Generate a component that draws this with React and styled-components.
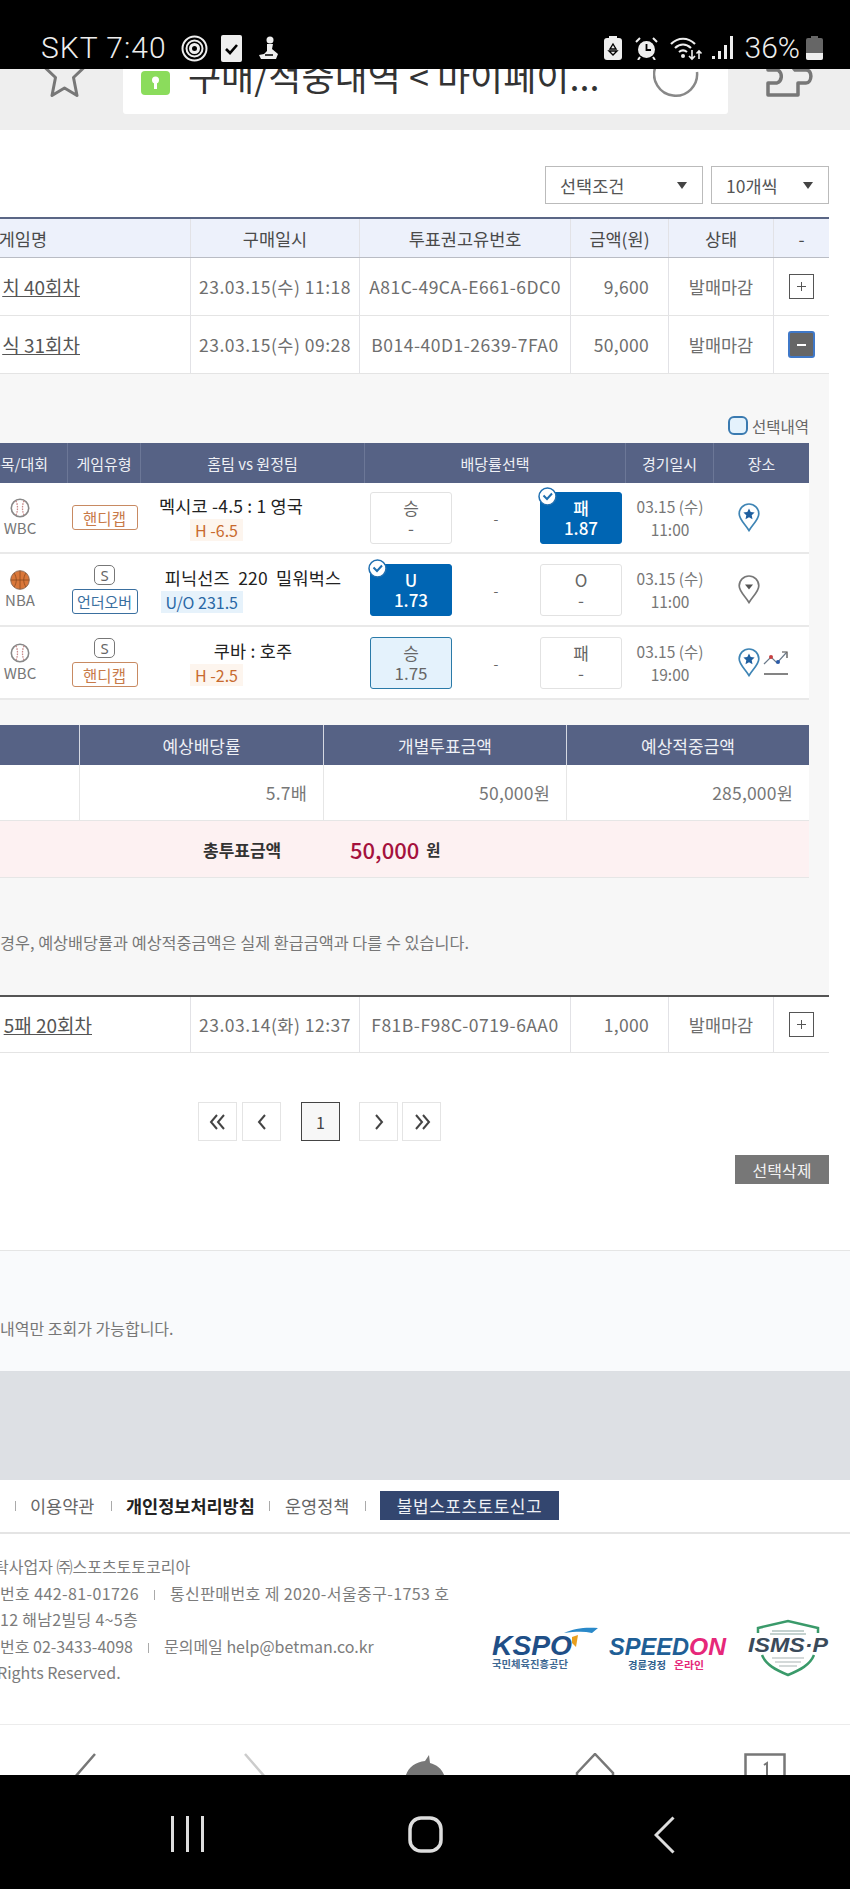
import React from "react";
import styled, { createGlobalStyle } from "styled-components";

const Global = createGlobalStyle`
  html, body { margin: 0; padding: 0; background: #fff; }
  body { font-family: "Noto Sans CJK KR", "Noto Sans", sans-serif; color: #666; }
  * { box-sizing: border-box; }
`;

const Screen = styled.div`
  width: 850px; height: 1889px; overflow: hidden;
  display: flex; flex-direction: column; background: #fff;
`;

/* status bar */
const StatusBar = styled.div`
  height: 69px; flex: none; background: #000; color: #eee;
  display: flex; align-items: flex-start; justify-content: space-between;
  padding: 33px 27px 0 41px;
`;
const StatusGroup = styled.div`display: flex; align-items: center; height: 30px;`;
const StatusText = styled.span`
  font-family: Roboto, sans-serif; font-size: 30px; line-height: 30px; white-space: pre;
  margin-right: ${p => p.$mr || 0}px; font-weight: 300; letter-spacing: ${p => p.$sp || 0}px;
`;
const StatusIcon = styled.svg`display: block; flex: none; margin-right: ${p => p.$mr || 0}px;`;

/* browser bar */
const BrowserBar = styled.div`
  height: 61px; flex: none; background: #eee; overflow: hidden; position: relative;
  display: flex; align-items: flex-start; padding-left: 44px;
`;
const BarIcon = styled.svg`
  display: block; flex: none; position: relative; z-index: 1;
  margin-top: ${p => p.$mt}px; margin-left: ${p => p.$ml || 0}px;
`;
const UrlBox = styled.div`
  width: 605px; height: 61px; margin-top: -16px; margin-left: 38px; background: #fff; border-radius: 3px;
  display: flex; align-items: center; padding: 0 18px 18px; gap: 18px; flex: none;
`;
const LockIcon = styled.svg`flex: none; margin-top: 16px;`;
const UrlTitle = styled.span`font-size: 36px; line-height: 44px; color: #333; white-space: nowrap;`;

/* content */
const Content = styled.div`flex: 1; min-height: 0; overflow: hidden; display: flex; flex-direction: column;`;
const Filters = styled.div`width: 829px; display: flex; justify-content: flex-end; gap: 8px; padding-top: 36px; margin-bottom: 13px;`;
const Select = styled.div`
  width: ${p => p.$w}px; height: 38px; border: 1px solid #bbb; background: #fff;
  display: flex; align-items: center; justify-content: space-between; padding: 0 15px 0 14px;
  font-size: 17.5px; color: #555;
  &::after { content: ""; border: 5px solid transparent; border-top: 7px solid #444; border-bottom: 0; }
`;

const MainGrid = styled.div`
  width: 829px; display: grid; grid-template-columns: 191px 169px 211px 98px 105px 55px;
  height: ${p => p.$h}px; background: ${p => p.$head ? "#edf1fb" : "#fff"};
  border-top: ${p => p.$head ? "2px solid #5a6685" : p.$strong ? "2px solid #555" : "0"};
  border-bottom: 1px solid ${p => p.$head ? "#b9bcc4" : "#e4e4e4"};
`;
const MainCell = styled.div`
  display: flex; align-items: center; justify-content: ${p => p.$right ? "flex-end" : "center"}; white-space: nowrap;
  font-size: 17.5px; letter-spacing: ${p => p.$sp || 0}px; color: ${p => p.$head ? "#4a4a4a" : "#6e6e6e"};
  border-right: 1px solid #e2e2e6; padding: 0 ${p => p.$pr || 0}px 0 0;
  &:last-child { border-right: 0; }
`;
const GameLink = styled.a`color: #555; text-decoration: underline; font-size: 19px;`;
const Toggle = styled.div`
  width: ${p => p.$open ? 27 : 25}px; height: ${p => p.$open ? 27 : 25}px;
  border: ${p => p.$open ? "2px solid #3f78c8" : "1.5px solid #555"}; border-radius: ${p => p.$open ? 3 : 0}px;
  background: ${p => p.$open ? "#666" : "#fff"}; position: relative;
  &::before { content: ""; position: absolute; left: 50%; top: 50%; width: 9px; height: ${p => p.$open ? 2 : 1}px; margin: -1px 0 0 -4.5px;
    background: ${p => p.$open ? "#fff" : "#555"}; }
  ${p => !p.$open && `&::after { content: ""; position: absolute; left: 50%; top: 50%; width: 1px; height: 9px; margin: -5px 0 0 -.5px; background: #555; }`}
`;

/* expanded panel */
const Panel = styled.div`width: 829px; height: 621px; background: #f7f7f7; padding-right: 20px; display: flex; flex-direction: column;`;
const Legend = styled.div`display: flex; justify-content: flex-end; align-items: center; gap: 4px; margin-top: 42px; height: 19px; margin-bottom: 8px; font-size: 15.5px; color: #666;`;
const LegendBox = styled.span`width: 20px; height: 19px; border: 2px solid #3a7ab0; background: #e4f2fc; border-radius: 6px;`;
const OddsHead = styled.div`
  display: grid; grid-template-columns: 68px 73px 224px 261px 88px 95px; height: 40px; background: #566285;
`;
const HeadCell = styled.div`
  display: flex; align-items: center; justify-content: ${p => p.$end ? "flex-end" : "center"}; white-space: nowrap;
  color: #eef0f5; font-size: 15px; border-right: 1px solid #6c7797; padding-right: ${p => p.$pr || 0}px;
  &:last-child { border-right: 0; }
`;
const OddsRow = styled.div`
  display: grid; grid-template-columns: 68px 73px 224px 261px 88px 95px; height: ${p => p.$h}px;
  background: #fff; border-bottom: 2px solid #e9e9e9; align-items: center;
`;
const SportCell = styled.div`width: 40px; display: flex; flex-direction: column; align-items: center; font-size: 15px; line-height: 20px; color: #777;`;
const TypeCell = styled.div`display: flex; flex-direction: column; align-items: center; gap: 4px;`;
const SBadge = styled.span`
  width: 21px; height: 20px; border: 1.5px solid #777; border-radius: 5px; color: #666;
  display: flex; align-items: center; justify-content: center; font-size: 15px; font-family: "Noto Sans", sans-serif;
`;
const TypeBadge = styled.span`
  width: 66px; height: 25px; border: 1.5px solid ${p => p.$blue ? "#3a6f9f" : "#c88a62"}; border-radius: 3px;
  color: ${p => p.$blue ? "#3a6f9f" : "#c87a48"}; font-size: ${p => p.$blue ? 15 : 15.5}px; background: #fff;
  display: flex; align-items: center; justify-content: center; white-space: nowrap;
`;
const TeamCell = styled.div`display: flex; flex-direction: column; gap: 2px;`;
const Teams = styled.div`
  font-size: 17.5px; letter-spacing: .2px; line-height: 22px; color: #222; white-space: pre; font-weight: 400;
  ${p => p.$left ? "margin-left: 18px;" : "text-align: center;"}
`;
const TagRow = styled.div`margin-left: 18px; width: 84px; display: flex; justify-content: flex-end; white-space: nowrap;`;
const Tag = styled.span`
  height: 22px; padding: 0 5px; line-height: 22px; font-size: 16px; white-space: nowrap; flex: none;
  background: ${p => p.$blue ? "#e6f2fb" : "#fdf5ee"}; color: ${p => p.$blue ? "#2a68a5" : "#c86a2e"};
`;
const OddsCell = styled.div`display: flex; align-items: center; justify-content: space-between; padding: 0 4px 0 5px; font-size: 14px; color: #666;`;
const OddsBtn = styled.div`
  width: ${p => p.$w}px; height: 52px; border-radius: 3px; position: relative;
  display: flex; flex-direction: column; align-items: center; justify-content: center;
  font-size: 17px; line-height: 20px;
  background: ${p => p.$state === "on" ? "#0065b3" : p.$state === "pick" ? "#e4f2fc" : "#fff"};
  color: ${p => p.$state === "on" ? "#fff" : "#666"};
  font-weight: ${p => p.$state === "on" ? 500 : 400};
  border: ${p => p.$state === "on" ? "1px solid #0065b3" : p.$state === "pick" ? "1.5px solid #2a7aa8" : "1.5px solid #e2e2e2"};
`;
const Check = styled.svg`position: absolute; left: -3px; top: -6px;`;
const DateCell = styled.div`text-align: center; font-size: 15.5px; line-height: 23px; color: #777;`;
const VenueCell = styled.div`display: flex; align-items: center; padding-left: 24px; gap: 3px;`;

const SumHead = styled.div`display: grid; grid-template-columns: 80px 244px 243px 242px; height: 40px; margin-top: 25px; background: #566285;`;
const SumHeadCell = styled.div`
  display: flex; align-items: center; justify-content: center; color: #eef0f5; font-size: 17px;
  border-right: 1px solid #d5d8e2; &:last-child { border-right: 0; }
`;
const SumRow = styled.div`display: grid; grid-template-columns: 80px 244px 243px 242px; height: 56px; background: #fff; border-bottom: 1px solid #e6e6e6;`;
const SumCell = styled.div`
  display: flex; align-items: center; justify-content: flex-end; padding-right: 16px; color: #777; font-size: 17.5px; letter-spacing: .2px;
  border-right: 1px solid #e6e6e6; &:last-child { border-right: 0; }
`;
const TotalRow = styled.div`
  height: 57px; background: #fdf1f2; border-bottom: 1px solid #e6e6e6; display: flex; align-items: center; padding-left: 203px;
`;
const TotalLabel = styled.span`font-size: 17px; font-weight: 700; color: #333; margin-right: 67px; width: 80px; white-space: nowrap;`;
const TotalValue = styled.span`font-size: 22px; font-weight: 500; color: #a5123d; margin-right: 7px;`;
const TotalUnit = styled.span`font-size: 15.5px; font-weight: 700; color: #333;`;
const Note = styled.div`margin-top: 52px; font-size: 16.3px; line-height: 24px; color: #777; white-space: nowrap;`;

/* pagination */
const Pager = styled.div`display: flex; padding-left: 198px; margin-top: 49px; height: 39px; width: 829px;`;
const PageBtn = styled.div`
  width: 39px; height: 39px; border: 1.5px solid ${p => p.$cur ? "#444" : "#e4e4e4"};
  background: ${p => p.$cur ? "#f7f7f7" : "#fff"}; color: #444; font-size: 16px;
  display: flex; align-items: center; justify-content: center; margin-left: ${p => p.$ml || 0}px;
`;
const ActionRow = styled.div`width: 829px; display: flex; justify-content: flex-end; margin-top: 14px;`;
const DeleteBtn = styled.div`width: 94px; height: 29px; background: #777; color: #f2f2f2; font-size: 16px; display: flex; align-items: center; justify-content: center;`;

/* notice + gap */
const NoticeBand = styled.div`
  margin-top: 66px; height: 122px; background: #f9fafc; border-top: 1px solid #e5e5e5; border-bottom: 1px solid #dcdfe3;
  padding-top: 65px; font-size: 16px; line-height: 24px; color: #777; white-space: nowrap;
`;
const GrayBand = styled.div`height: 108px; background: #dde0e4; flex: none;`;

/* footer */
const FootNav = styled.div`height: 54px; flex: none; border-bottom: 2px solid #e4e4e4; display: flex; align-items: center; padding-bottom: 1px; font-size: 17.5px; color: #666; white-space: nowrap;`;
const Sep = styled.i`width: 1px; height: 10px; background: #aaa; flex: none; margin-left: ${p => p.$ml}px; margin-right: ${p => p.$mr}px;`;
const FootLink = styled.span`font-weight: ${p => p.$bold ? 700 : 400}; color: ${p => p.$bold ? "#222" : "#666"}; width: ${p => p.$w}px; flex: none;`;
const ReportBtn = styled.div`
  width: 179px; height: 29px; background: #33466f; color: #eef0f5; font-size: 17px; letter-spacing: .5px;
  display: flex; align-items: center; justify-content: center; flex: none;
`;
const FootBody = styled.div`height: 191px; flex: none; border-bottom: 1px solid #ececec; display: flex; justify-content: space-between; padding: 19px 21px 0 0;`;
const FootLines = styled.div`display: flex; flex-direction: column; font-size: 16px; line-height: 26.5px; color: #7c7c7c; white-space: nowrap;`;
const FootLine = styled.div`text-indent: ${p => p.$indent || 0}px; letter-spacing: ${p => p.$sp || 0}px;`;
const FootSep = styled.span`display: inline-block; width: 1px; height: 10px; background: #aaa; margin: 0 15px;`;
const Logos = styled.div`display: flex; align-items: flex-start; margin-top: 74px; flex: none;`;
const Logo = styled.svg`display: block; flex: none; margin-left: ${p => p.$ml || 0}px; margin-top: ${p => p.$mt || 0}px;`;

/* browser bottom nav */
const BottomNav = styled.div`height: 50px; flex: none; overflow: hidden; display: grid; grid-template-columns: repeat(5, 170px); padding-top: 28px; background: #fff;`;
const NavSlot = styled.div`display: flex; justify-content: center;`;
const SysNav = styled.div`height: 114px; flex: none; background: #000; display: flex; align-items: flex-start; padding: 41px 0 0 171px;`;
const SysIcon = styled.svg`display: block; flex: none; margin-right: ${p => p.$mr || 0}px;`;

/* icons */
const Ball = () => (
  <svg width="20" height="20" viewBox="0 0 20 20">
    <circle cx="10" cy="10" r="8.7" fill="#fff" stroke="#888" strokeWidth="1.6" />
    <path d="M6 2.8c2 4.400 2 10 0 14.400M14 2.800c-2 4.400-2 10 0 14.400" fill="none" stroke="#c98a8a" strokeWidth="1.3" strokeDasharray="1.600 1" />
  </svg>
);
const Basket = () => (
  <svg width="20" height="20" viewBox="0 0 20 20">
    <circle cx="10" cy="10" r="9.300" fill="#d9773a" stroke="#8d6a55" strokeWidth="1" />
    <path d="M1 10h18M10 1v18M4 3c3 4 3 10 0 14M16 3c-3 4-3 10 0 14" fill="none" stroke="#8c4a20" strokeWidth=".8" />
  </svg>
);
const Pin = ({ star, gray }) => (
  <svg width="22" height="29" viewBox="0 0 22 29">
    <path d="M11 27.500C7 21 1.200 16.500 1.200 10.800a9.800 9.800 0 0 1 19.600 0C20.800 16.500 15 21 11 27.500z" fill="#fff" stroke={gray ? "#777" : "#3f85b5"} strokeWidth="1.700" />
    {star
      ? <path d="M11 5.500l1.700 3.600 3.900.5-2.900 2.700.8 3.900-3.500-2-3.500 2 .8-3.900-2.900-2.700 3.900-.5z" fill="#1f5f9f" />
      : <path d="M7 9.500h8l-4 5z" fill="#555" />}
  </svg>
);
const ChartIcon = () => (
  <svg width="26" height="26" viewBox="0 0 26 26">
    <path d="M1 14l7-7 6 6 9-10" fill="none" stroke="#6a7a8a" strokeWidth="1.200" />
    <circle cx="8" cy="7" r="2" fill="#c84040" /><circle cx="15" cy="12" r="2" fill="#2a5aa8" />
    <path d="M19 2h5v6" fill="none" stroke="#444" strokeWidth="1.200" />
    <path d="M1 24h24" stroke="#666" strokeWidth="1.600" />
  </svg>
);
const CheckMark = () => (
  <Check width="19" height="19" viewBox="0 0 19 19">
    <circle cx="9.500" cy="9.500" r="8.500" fill="#fff" stroke="#1f6fb0" strokeWidth="1.500" />
    <path d="M5.500 8.500l3.500 3.500 5-5.500" fill="none" stroke="#1f6fb0" strokeWidth="2" />
  </Check>
);
const TypeCol = ({ s, blue, label }) => (
  <TypeCell>
    {s && <SBadge>S</SBadge>}
    <TypeBadge $blue={blue}>{label}</TypeBadge>
  </TypeCell>
);

const mainRows = [
  { name: "치 40회차", pr: 110, date: "23.03.15(수) 11:18", code: "A81C-49CA-E661-6DC0", amt: "9,600" },
  { name: "식 31회차", pr: 110, date: "23.03.15(수) 09:28", code: "B014-40D1-2639-7FA0", amt: "50,000", open: true },
  { name: "5패 20회차", pr: 98, date: "23.03.14(화) 12:37", code: "F81B-F98C-0719-6AA0", amt: "1,000", strong: true },
];

const MainRow = ({ r }) => (
  <MainGrid $h={58} $strong={r.strong}>
    <MainCell $right $pr={r.pr}><GameLink>{r.name}</GameLink></MainCell>
    <MainCell $sp={.5}>{r.date}</MainCell>
    <MainCell $sp={.5}>{r.code}</MainCell>
    <MainCell $right $pr={19} $sp={.3}>{r.amt}</MainCell>
    <MainCell>발매마감</MainCell>
    <MainCell><Toggle $open={r.open} /></MainCell>
  </MainGrid>
);

export default function App() {
  return (
    <Screen>
      <Global />
      <StatusBar>
        <StatusGroup>
          <StatusText $mr={14} $sp={1}>SKT 7:40</StatusText>
          <StatusIcon $mr={13} width="27" height="27" viewBox="0 0 27 27">
            <g fill="none" stroke="#eee"><circle cx="13.500" cy="13.500" r="12" strokeWidth="2" /><circle cx="13.500" cy="13.500" r="8" strokeWidth="2" /><circle cx="13.500" cy="13.500" r="4" strokeWidth="3" /></g>
          </StatusIcon>
          <StatusIcon $mr={16} width="21" height="27" viewBox="0 0 21 27">
            <rect width="21" height="27" rx="2" fill="#eee" /><path d="M5 14l4 4 7-8" fill="none" stroke="#000" strokeWidth="2.600" />
          </StatusIcon>
          <StatusIcon width="22" height="25" viewBox="0 0 22 25">
            <circle cx="12" cy="4" r="3.500" fill="#eee" /><path d="M9 8h6l-1 5 6 5-2 5H3l-2-4 5-1 3-3z" fill="#eee" /><path d="M7 19h8" stroke="#000" strokeWidth="1.500" />
          </StatusIcon>
        </StatusGroup>
        <StatusGroup>
          <StatusIcon $mr={13} width="18" height="24" viewBox="0 0 18 24">
            <rect x="5" width="8" height="3" fill="#eee" /><rect y="2" width="18" height="22" rx="3" fill="#eee" />
            <path d="M9 8l3 5H6zM5 15h8l-4 4z" fill="none" stroke="#000" strokeWidth="1.400" />
          </StatusIcon>
          <StatusIcon $mr={12} width="23" height="23" viewBox="0 0 23 23">
            <circle cx="11.500" cy="12.500" r="8.500" fill="#eee" /><path d="M11.500 7v6h4.500" fill="none" stroke="#000" strokeWidth="1.800" />
            <path d="M1 5l4-4M22 5l-4-4M5 20l-2 3M18 20l2 3" stroke="#eee" strokeWidth="2" />
          </StatusIcon>
          <StatusIcon $mr={9} width="33" height="25" viewBox="0 0 33 25">
            <g fill="none" stroke="#eee" strokeWidth="2.200"><path d="M1 8c7-7 17-7 24 0" /><path d="M5 12c5-4.500 11-4.500 16 0" /><path d="M9 16c2.500-2 5.500-2 8 0" /></g>
            <circle cx="13" cy="20" r="2" fill="#eee" />
            <path d="M22 14v9m-3-3l3 3 3-3M29 23v-8m-2.500 2.500l2.500-2.500 2.500 2.500" fill="none" stroke="#eee" strokeWidth="1.600" />
          </StatusIcon>
          <StatusIcon $mr={12} width="21" height="24" viewBox="0 0 21 24">
            <g fill="#eee"><rect y="20" width="3" height="3" /><rect x="6" y="15" width="3" height="8" /><rect x="12" y="9" width="3" height="14" /><rect x="18" y="0" width="3" height="23" /></g>
          </StatusIcon>
          <StatusText $mr={6}>36%</StatusText>
          <StatusIcon width="17" height="24" viewBox="0 0 17 24">
            <rect x="5" width="7" height="3" fill="#666" /><rect y="2" width="17" height="22" rx="2" fill="#666" />
            <path d="M0 17h17v5a2 2 0 0 1-2 2H2a2 2 0 0 1-2-2z" fill="#eee" />
          </StatusIcon>
        </StatusGroup>
      </StatusBar>

      <BrowserBar>
        <BarIcon $mt={-20} width="41" height="48" viewBox="0 0 41 48">
          <path d="M20.500 3l6 14.500 13.500 1-10.500 10 3.500 18-12.500-7.500-12.500 7.500 3.500-18L1 18.500l13.500-1z" fill="none" stroke="#777" strokeWidth="3" strokeLinejoin="round" />
        </BarIcon>
        <UrlBox>
          <LockIcon width="29" height="24" viewBox="0 0 29 24">
            <rect width="29" height="24" rx="4" fill="#8bdc5c" /><circle cx="14.500" cy="9" r="3.500" fill="#fff" /><rect x="13" y="10" width="3" height="8" fill="#fff" />
          </LockIcon>
          <UrlTitle>구매/적중내역 &lt; 마이페이...</UrlTitle>
        </UrlBox>
        <BarIcon $mt={-17} $ml={-75} width="46" height="46" viewBox="0 0 46 46">
          <path d="M44 20A21.500 21.500 0 1 1 34 4" fill="none" stroke="#888" strokeWidth="2.500" />
        </BarIcon>
        <BarIcon $mt={-19} $ml={66} width="48" height="48" viewBox="0 0 48 48">
          <path d="M3 10V20H13C18 24 17 31 12 33H3V45H33V33H41C47 33 48 20 41 20H30C26 16 26 12 30 10" fill="none" stroke="#777" strokeWidth="3.500" strokeLinejoin="round" />
        </BarIcon>
      </BrowserBar>

      <Content>
        <Filters>
          <Select $w={158}>선택조건</Select>
          <Select $w={118}>10개씩</Select>
        </Filters>

        <MainGrid $head $h={41}>
          <MainCell $head $right $pr={143}>게임명</MainCell>
          <MainCell $head>구매일시</MainCell>
          <MainCell $head>투표권고유번호</MainCell>
          <MainCell $head>금액(원)</MainCell>
          <MainCell $head>상태</MainCell>
          <MainCell $head>-</MainCell>
        </MainGrid>
        {mainRows.slice(0, 2).map(r => <MainRow key={r.code} r={r} />)}

        <Panel>
          <Legend><LegendBox />선택내역</Legend>
          <OddsHead>
            <HeadCell $end $pr={19}>종목/대회</HeadCell>
            <HeadCell>게임유형</HeadCell>
            <HeadCell>홈팀 vs 원정팀</HeadCell>
            <HeadCell>배당률선택</HeadCell>
            <HeadCell>경기일시</HeadCell>
            <HeadCell>장소</HeadCell>
          </OddsHead>

          <OddsRow $h={71}>
            <SportCell><Ball />WBC</SportCell>
            <TypeCol label="핸디캡" />
            <TeamCell>
              <Teams $left>멕시코 -4.5 : 1 영국</Teams>
              <TagRow><Tag>H -6.5</Tag></TagRow>
            </TeamCell>
            <OddsCell>
              <OddsBtn $w={82}><span>승</span><span>-</span></OddsBtn>
              -
              <OddsBtn $w={82} $state="on"><CheckMark /><span>패</span><span>1.87</span></OddsBtn>
            </OddsCell>
            <DateCell>03.15 (수)<br />11:00</DateCell>
            <VenueCell><Pin star /></VenueCell>
          </OddsRow>

          <OddsRow $h={73}>
            <SportCell><Basket />NBA</SportCell>
            <TypeCol s blue label="언더오버" />
            <TeamCell>
              <Teams>{"피닉선즈  220  밀워벅스"}</Teams>
              <TagRow><Tag $blue>U/O 231.5</Tag></TagRow>
            </TeamCell>
            <OddsCell>
              <OddsBtn $w={82} $state="on"><CheckMark /><span>U</span><span>1.73</span></OddsBtn>
              -
              <OddsBtn $w={82}><span>O</span><span>-</span></OddsBtn>
            </OddsCell>
            <DateCell>03.15 (수)<br />11:00</DateCell>
            <VenueCell><Pin gray /></VenueCell>
          </OddsRow>

          <OddsRow $h={73}>
            <SportCell><Ball />WBC</SportCell>
            <TypeCol s label="핸디캡" />
            <TeamCell>
              <Teams>쿠바 : 호주</Teams>
              <TagRow><Tag>H -2.5</Tag></TagRow>
            </TeamCell>
            <OddsCell>
              <OddsBtn $w={82} $state="pick"><span>승</span><span>1.75</span></OddsBtn>
              -
              <OddsBtn $w={82}><span>패</span><span>-</span></OddsBtn>
            </OddsCell>
            <DateCell>03.15 (수)<br />19:00</DateCell>
            <VenueCell><Pin star /><ChartIcon /></VenueCell>
          </OddsRow>

          <SumHead>
            <SumHeadCell />
            <SumHeadCell>예상배당률</SumHeadCell>
            <SumHeadCell>개별투표금액</SumHeadCell>
            <SumHeadCell>예상적중금액</SumHeadCell>
          </SumHead>
          <SumRow>
            <SumCell />
            <SumCell>5.7배</SumCell>
            <SumCell>50,000원</SumCell>
            <SumCell>285,000원</SumCell>
          </SumRow>
          <TotalRow>
            <TotalLabel>총투표금액</TotalLabel>
            <TotalValue>50,000</TotalValue>
            <TotalUnit>원</TotalUnit>
          </TotalRow>
          <Note>경우, 예상배당률과 예상적중금액은 실제 환급금액과 다를 수 있습니다.</Note>
        </Panel>

        <MainRow r={mainRows[2]} />

        <Pager>
          <PageBtn>
            <svg width="18" height="16" viewBox="0 0 18 16"><path d="M8 1L2 8l6 7M15 1L9 8l6 7" fill="none" stroke="#444" strokeWidth="2" /></svg>
          </PageBtn>
          <PageBtn $ml={5}>
            <svg width="10" height="16" viewBox="0 0 10 16"><path d="M8 1L2 8l6 7" fill="none" stroke="#444" strokeWidth="2" /></svg>
          </PageBtn>
          <PageBtn $cur $ml={20}>1</PageBtn>
          <PageBtn $ml={19}>
            <svg width="10" height="16" viewBox="0 0 10 16"><path d="M2 1l6 7-6 7" fill="none" stroke="#444" strokeWidth="2" /></svg>
          </PageBtn>
          <PageBtn $ml={4}>
            <svg width="18" height="16" viewBox="0 0 18 16"><path d="M3 1l6 7-6 7M10 1l6 7-6 7" fill="none" stroke="#444" strokeWidth="2" /></svg>
          </PageBtn>
        </Pager>
        <ActionRow><DeleteBtn>선택삭제</DeleteBtn></ActionRow>

        <NoticeBand>내역만 조회가 가능합니다.</NoticeBand>
        <GrayBand />

        <FootNav>
          <Sep $ml={15} $mr={14} />
          <FootLink $w={66}>이용약관</FootLink>
          <Sep $ml={15} $mr={14} />
          <FootLink $bold $w={129}>개인정보처리방침</FootLink>
          <Sep $ml={14} $mr={15} />
          <FootLink $w={66}>운영정책</FootLink>
          <Sep $ml={14} $mr={14} />
          <ReportBtn>불법스포츠토토신고</ReportBtn>
        </FootNav>

        <FootBody>
          <FootLines>
            <FootLine $indent={-6}>탁사업자 ㈜스포츠토토코리아</FootLine>
            <FootLine $sp={.4}>번호 442-81-01726<FootSep />통신판매번호 제 2020-서울중구-1753 호</FootLine>
            <FootLine $sp={.3}>12 해남2빌딩 4~5층</FootLine>
            <FootLine>번호 02-3433-4098<FootSep />문의메일 help@betman.co.kr</FootLine>
            <FootLine $indent={-3}>Rights Reserved.</FootLine>
          </FootLines>
          <Logos>
            <Logo width="106" height="42" viewBox="0 0 106 42">
              <text x="0" y="28" fontFamily="Liberation Sans" fontWeight="700" fontStyle="italic" fontSize="28" fill="#1f4f87" textLength="80" lengthAdjust="spacingAndGlyphs">KSPO</text>
              <path d="M72 6c10-5 22-6 34-5l-6 5c-9-2-18-1-28 0z" fill="#2a89c9" />
              <path d="M80 10l6-2-2 12-4-4z" fill="#e9a01f" />
              <text x="0" y="41" fontFamily="Noto Sans CJK KR" fontWeight="700" fontSize="10.500" fill="#3f6a94" textLength="76" lengthAdjust="spacingAndGlyphs">국민체육진흥공단</text>
            </Logo>
            <Logo $ml={11} $mt={7} width="118" height="36" viewBox="0 0 118 36">
              <text x="0" y="21" fontFamily="Liberation Sans" fontWeight="700" fontStyle="italic" fontSize="24" fill="#1f5f96" textLength="80" lengthAdjust="spacingAndGlyphs">SPEED</text>
              <text x="80" y="21" fontFamily="Liberation Sans" fontWeight="700" fontStyle="italic" fontSize="24" fill="#e6287a" textLength="37" lengthAdjust="spacingAndGlyphs">ON</text>
              <text x="19" y="35" fontFamily="Noto Sans CJK KR" fontWeight="700" fontSize="10.500" fill="#2f5f8e" textLength="38" lengthAdjust="spacingAndGlyphs">경륜경정</text>
              <text x="65" y="35" fontFamily="Noto Sans CJK KR" fontWeight="700" fontSize="10.500" fill="#e6287a" textLength="30" lengthAdjust="spacingAndGlyphs">온라인</text>
            </Logo>
            <Logo $ml={21} $mt={-8} width="81" height="58" viewBox="0 0 81 58">
              <path d="M10 14V9l30-7 30 7v5" fill="none" stroke="#3a9a6a" strokeWidth="2.500" />
              <path d="M14 36c4 10 14 15 26 20 12-5 22-10 26-20" fill="none" stroke="#3a9a6a" strokeWidth="2.500" />
              <path d="M24 12h32M22 15h36" stroke="#8aa5a0" strokeWidth="1.200" />
              <text x="0" y="33" fontFamily="Liberation Sans" fontWeight="700" fontStyle="italic" fontSize="21" fill="#3a4a5a" textLength="80" lengthAdjust="spacingAndGlyphs">ISMS·P</text>
              <path d="M24 39h32M27 43h26M31 47h18" stroke="#aab4b4" strokeWidth="1.200" />
            </Logo>
          </Logos>
        </FootBody>

        <BottomNav>
          <NavSlot>
            <svg width="24" height="40" viewBox="0 0 24 40"><path d="M22 1L2 24l20 20" fill="none" stroke="#777" strokeWidth="2.500" /></svg>
          </NavSlot>
          <NavSlot>
            <svg width="24" height="40" viewBox="0 0 24 40"><path d="M2 1l20 23L2 44" fill="none" stroke="#ccc" strokeWidth="2.500" /></svg>
          </NavSlot>
          <NavSlot>
            <svg width="44" height="40" viewBox="0 0 44 40"><path d="M22 8l4-6 1 8c8 2 15 8 15 18H2C2 17 11 9 22 8z" fill="#777" /></svg>
          </NavSlot>
          <NavSlot>
            <svg width="40" height="40" viewBox="0 0 40 40"><path d="M2 20L20 1l18 19v20H2z" fill="none" stroke="#777" strokeWidth="2.500" /></svg>
          </NavSlot>
          <NavSlot>
            <svg width="42" height="40" viewBox="0 0 42 40">
              <rect x="1.500" y="1.500" width="39" height="40" fill="none" stroke="#777" strokeWidth="2.500" />
              <path d="M20 12l3-2v14" fill="none" stroke="#777" strokeWidth="2" />
            </svg>
          </NavSlot>
        </BottomNav>

        <SysNav>
          <SysIcon $mr={204} width="33" height="36" viewBox="0 0 33 36">
            <path d="M1.500 0v36M16.500 0v36M31.500 0v36" stroke="#ddd" strokeWidth="3" />
          </SysIcon>
          <SysIcon $mr={211} width="35" height="37" viewBox="0 0 35 37">
            <rect x="2" y="2" width="31" height="33" rx="11" fill="none" stroke="#ddd" strokeWidth="3.500" />
          </SysIcon>
          <SysIcon width="21" height="38" viewBox="0 0 21 38">
            <path d="M19.500 1.500L2 19l17.500 17.500" fill="none" stroke="#ddd" strokeWidth="3" />
          </SysIcon>
        </SysNav>
      </Content>
    </Screen>
  );
}
